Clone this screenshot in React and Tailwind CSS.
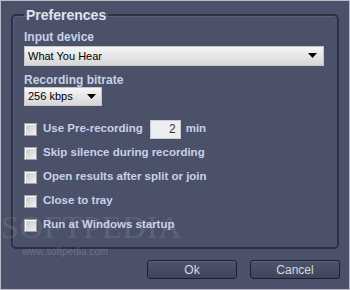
import React from "react";

function Arrow() {
  return (
    <svg width="9" height="6" viewBox="0 0 9 6" className="shrink-0">
      <path d="M0 0H9L4.5 5Z" fill="#000" />
    </svg>
  );
}

const SANS = { fontFamily: '"Liberation Sans", Arial, sans-serif' };

function Check({ label, children }) {
  return (
    <div className="flex items-center h-[24px]">
      <div className="w-[13px] h-[13px] border border-[#9a9ea8] bg-gradient-to-br from-[#c8c8c8] to-[#f0f0f0] shadow-[inset_1px_1px_0_#fff]" />
      <span className="ml-[6px] text-[#c7d1e6] font-bold text-[11.5px]">{label}</span>
      {children}
    </div>
  );
}

export default function App() {
  return (
    <div
      className="relative w-[350px] h-[290px] bg-[#4b5169] border border-[#b8bcc6] overflow-hidden"
      style={SANS}
    >
      <fieldset className="mx-[10px] mt-[6px] h-[242px] border-2 border-[#2c3041] rounded-[5px] px-[11px] shadow-[inset_1px_1px_0_#5a6079]">
        <legend className="ml-0 px-[2px] text-[#dfe4ee] font-bold text-[14px] leading-[16px]">
          Preferences
        </legend>
        <div className="text-[#c7d1e6] font-bold text-[12px] leading-[14px] mt-[7px]">Input device</div>
        <div className="mt-[2px] h-[20px] w-[300px] flex items-center justify-between pl-[3px] pr-[6px] border border-[#c4c6ca] bg-gradient-to-b from-[#f6f6f6] to-[#d6d6d6] text-[11px] text-black">
          <span>What You Hear</span>
          <Arrow />
        </div>
        <div className="text-[#c7d1e6] font-bold text-[12px] leading-[14px] mt-[7px]">Recording bitrate</div>
        <div className="mt-[0px] h-[19px] w-[78px] flex items-center justify-between pl-[3px] pr-[5px] border border-[#c4c6ca] bg-gradient-to-b from-[#f6f6f6] to-[#d6d6d6] text-[11px] text-black">
          <span>256 kbps</span>
          <Arrow />
        </div>
        <div className="mt-[11px] flex flex-col">
          <Check label="Use Pre-recording">
            <div className="ml-[7px] w-[31px] h-[19px] bg-[#eceef0] border border-[#c8cacf] flex items-center justify-end pr-[4px] text-[12px] text-[#333]">
              2
            </div>
            <span className="ml-[5px] text-[#c7d1e6] font-bold text-[11.5px]">min</span>
          </Check>
          <Check label="Skip silence during recording" />
          <Check label="Open results after split or join" />
          <Check label="Close to tray" />
          <Check label="Run at Windows startup" />
        </div>
      </fieldset>
      <div className="flex justify-end gap-[13px] pr-[9px] mt-[11px]">
        {["Ok", "Cancel"].map((t) => (
          <div
            key={t}
            className="w-[90px] h-[19px] rounded-[3px] border border-[#1c202c] bg-gradient-to-b from-[#4e546b] to-[#3f4559] flex items-center justify-center text-[12px] text-[#d5d9e2] shadow-[inset_0_1px_0_#5f6580]"
          >
            {t}
          </div>
        ))}
      </div>
      <div
        className="absolute left-0 top-[210px] text-[32px] tracking-[1px] leading-none text-white/10 pointer-events-none"
        style={{ fontFamily: '"Liberation Serif", serif' }}
      >
        SOFTPEDIA
      </div>
      <div className="absolute left-[21px] top-[246px] text-[10px] leading-none text-white/20 pointer-events-none">
        www.softpedia.com
      </div>
    </div>
  );
}
